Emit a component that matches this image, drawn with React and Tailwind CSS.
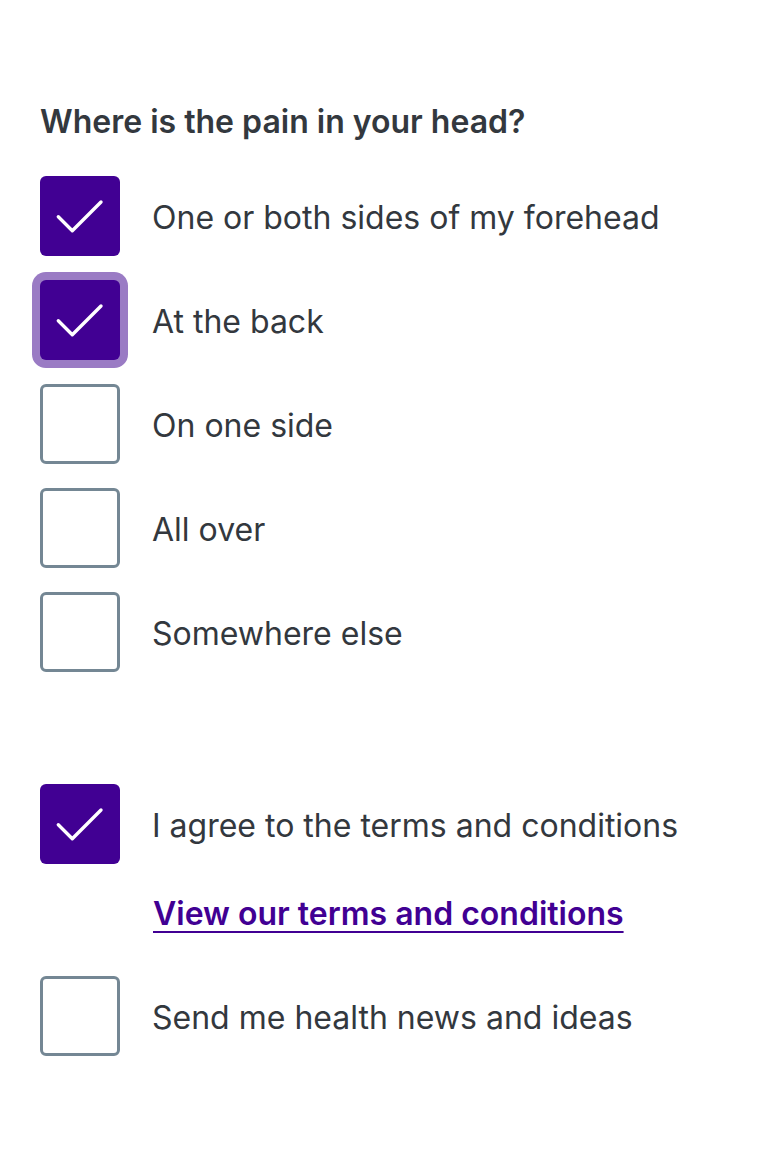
import React from "react";

function Check() {
  return (
    <svg width="80" height="80" viewBox="0 0 80 80" fill="none">
      <path d="M18.3 40.7 L32.3 54.7 L61 26" stroke="white" strokeWidth="3.4" strokeLinecap="round" strokeLinejoin="round" />
    </svg>
  );
}

function Box({ checked, focus }) {
  if (checked) {
    return (
      <div className={"w-20 h-20 shrink-0 rounded-[6px] bg-[#410093] " + (focus ? "ring-8 ring-[#9a7bc4]" : "")}>
        <Check />
      </div>
    );
  }
  return <div className="w-20 h-20 shrink-0 rounded-[6px] border-[3px] border-[#748794] bg-white" />;
}

function Row({ label, checked, focus }) {
  return (
    <div className="flex items-center gap-8 h-20">
      <Box checked={checked} focus={focus} />
      <span className="text-[32px] text-[#33383e] leading-none pt-1">{label}</span>
    </div>
  );
}

export default function App() {
  return (
    <div className="bg-white min-h-[1160px] px-10 pt-[106px]" style={{ fontFamily: "Inter, 'Noto Sans', sans-serif" }}>
      <h2 className="text-[32px] font-semibold text-[#33383e] leading-none mb-[38px]">Where is the pain in your head?</h2>
      <div className="flex flex-col gap-6">
        <Row label="One or both sides of my forehead" checked />
        <Row label="At the back" checked focus />
        <Row label="On one side" />
        <Row label="All over" />
        <Row label="Somewhere else" />
      </div>
      <div className="flex flex-col mt-28">
        <Row label="I agree to the terms and conditions" checked />
        <div className="pl-[113px] mt-[34px] mb-[46px] text-[32px] leading-none">
          <a className="font-semibold text-[#410093] underline decoration-2 underline-offset-[6px]">View our terms and conditions</a>
        </div>
        <Row label="Send me health news and ideas" />
      </div>
    </div>
  );
}
